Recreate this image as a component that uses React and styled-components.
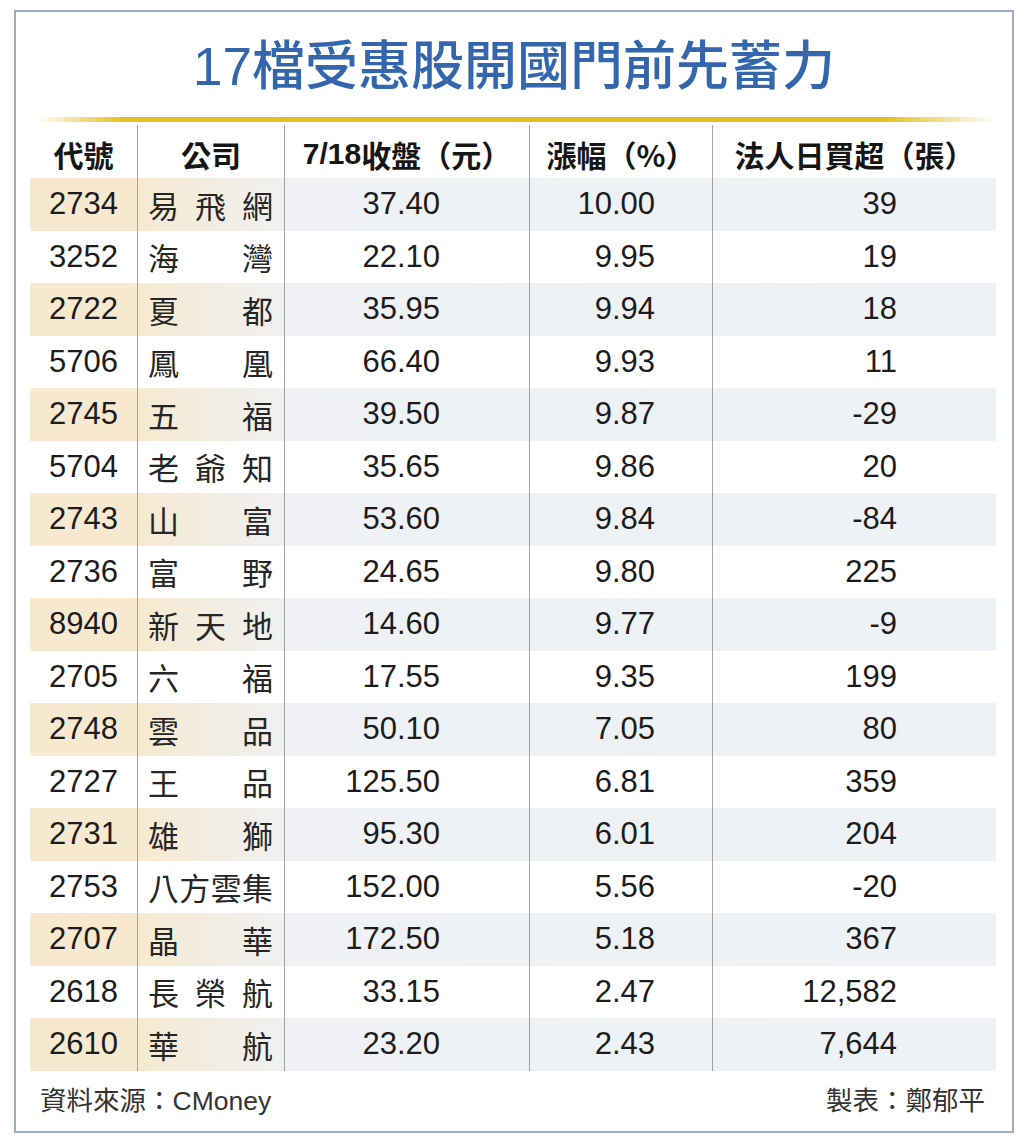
import React from "react";
import styled, { createGlobalStyle } from "styled-components";

const GlobalStyle = createGlobalStyle`
  html, body {
    margin: 0;
    padding: 0;
    background: #ffffff;
  }
  body {
    font-family: "Liberation Sans", "Noto Sans CJK TC", sans-serif;
    color: #1e1e1e;
  }
`;

const Page = styled.div`
  width: 1024px;
  height: 1136px;
  padding: 10px 0 0 14px;
  box-sizing: border-box;
`;

const Frame = styled.div`
  width: 1000px;
  height: 1123px;
  box-sizing: border-box;
  border: 2px solid #9badc8;
  display: flex;
  flex-direction: column;
`;

const Title = styled.h1`
  margin: 0;
  height: 105px;
  padding-bottom: 6px;
  box-sizing: border-box;
  display: flex;
  align-items: center;
  justify-content: center;
  font-family: "Liberation Sans", "Noto Sans CJK TC", sans-serif;
  font-size: 53px;
  font-weight: 500;
  color: #3466ad;
  letter-spacing: 0;
`;

const GoldRule = styled.div`
  margin-left: 19px;
  width: 962px;
  height: 5px;
  background: linear-gradient(
    to right,
    rgba(232, 196, 40, 0) 0%,
    #e6c21f 9%,
    #e3bf1c 88%,
    rgba(232, 196, 40, 0) 100%
  );
`;

const Table = styled.div`
  margin-left: 14px;
  width: 966px;
  display: flex;
  flex-direction: column;
`;

const Row = styled.div`
  display: grid;
  grid-template-columns: 107px 147px 245px 183px 284px;
  height: ${(p) => (p.$head ? "56px" : "52.5px")};
  background: ${(p) =>
    p.$shade
      ? "linear-gradient(to right, #f6e9cf 0, #f6e9cf 107px, #eff1f4 260px, #eef1f5 100%)"
      : "transparent"};
`;

const Cell = styled.div`
  display: flex;
  align-items: center;
  justify-content: ${(p) =>
    p.$align === "right" ? "flex-end" : p.$align === "left" ? "flex-start" : "center"};
  padding-right: ${(p) => p.$pr || 0}px;
  padding-left: ${(p) => p.$pl || 0}px;
  box-sizing: border-box;
  border-left: ${(p) => (p.$first ? "none" : "1px solid #a3a3a3")};
  font-size: 31px;
  color: #1c1c1c;
  white-space: nowrap;
`;

const HeadCell = styled(Cell)`
  font-family: "Noto Sans CJK TC", sans-serif;
  font-weight: 700;
  font-size: 30px;
  color: #161616;
  padding-top: 4px;
  background-clip: content-box;
  border-left-color: ${(p) => (p.$first ? "transparent" : "#a3a3a3")};
  margin-top: 3px;
  height: 53px;
  align-self: end;
`;

const HeadNum = styled.span`
  font-family: "Liberation Sans", sans-serif;
  font-weight: 700;
`;

const Name = styled.div`
  width: 100%;
  display: flex;
  justify-content: space-between;
  font-family: "Noto Sans CJK TC", sans-serif;
  font-size: 31px;
  line-height: 1;
  color: #262626;
`;

const Footer = styled.div`
  display: flex;
  justify-content: space-between;
  padding: 8px 27px 0 24px;
  font-family: "Liberation Sans", "Noto Sans CJK TC", sans-serif;
  font-size: 26.5px;
  color: #333333;
`;

const rows = [
  ["2734", "易飛網", "37.40", "10.00", "39"],
  ["3252", "海灣", "22.10", "9.95", "19"],
  ["2722", "夏都", "35.95", "9.94", "18"],
  ["5706", "鳳凰", "66.40", "9.93", "11"],
  ["2745", "五福", "39.50", "9.87", "-29"],
  ["5704", "老爺知", "35.65", "9.86", "20"],
  ["2743", "山富", "53.60", "9.84", "-84"],
  ["2736", "富野", "24.65", "9.80", "225"],
  ["8940", "新天地", "14.60", "9.77", "-9"],
  ["2705", "六福", "17.55", "9.35", "199"],
  ["2748", "雲品", "50.10", "7.05", "80"],
  ["2727", "王品", "125.50", "6.81", "359"],
  ["2731", "雄獅", "95.30", "6.01", "204"],
  ["2753", "八方雲集", "152.00", "5.56", "-20"],
  ["2707", "晶華", "172.50", "5.18", "367"],
  ["2618", "長榮航", "33.15", "2.47", "12,582"],
  ["2610", "華航", "23.20", "2.43", "7,644"],
];

const App = () => {
  return (
    <>
      <GlobalStyle />
      <Page>
        <Frame>
          <Title>17檔受惠股開國門前先蓄力</Title>
          <GoldRule />
          <Table>
            <Row $head>
              <HeadCell $first>代號</HeadCell>
              <HeadCell>公司</HeadCell>
              <HeadCell>
                <HeadNum>7/18</HeadNum>收盤（元）
              </HeadCell>
              <HeadCell>漲幅（%）</HeadCell>
              <HeadCell>法人日買超（張）</HeadCell>
            </Row>
            {rows.map(([code, name, price, pct, net], i) => (
              <Row key={code} $shade={i % 2 === 0}>
                <Cell $first>{code}</Cell>
                <Cell $pl={10} $pr={11}>
                  <Name>
                    {name.split("").map((ch, j) => (
                      <span key={j}>{ch}</span>
                    ))}
                  </Name>
                </Cell>
                <Cell $align="right" $pr={89}>{price}</Cell>
                <Cell $align="right" $pr={57}>{pct}</Cell>
                <Cell $align="right" $pr={99}>{net}</Cell>
              </Row>
            ))}
          </Table>
          <Footer>
            <span>資料來源：CMoney</span>
            <span>製表：鄭郁平</span>
          </Footer>
        </Frame>
      </Page>
    </>
  );
};

export default App;
